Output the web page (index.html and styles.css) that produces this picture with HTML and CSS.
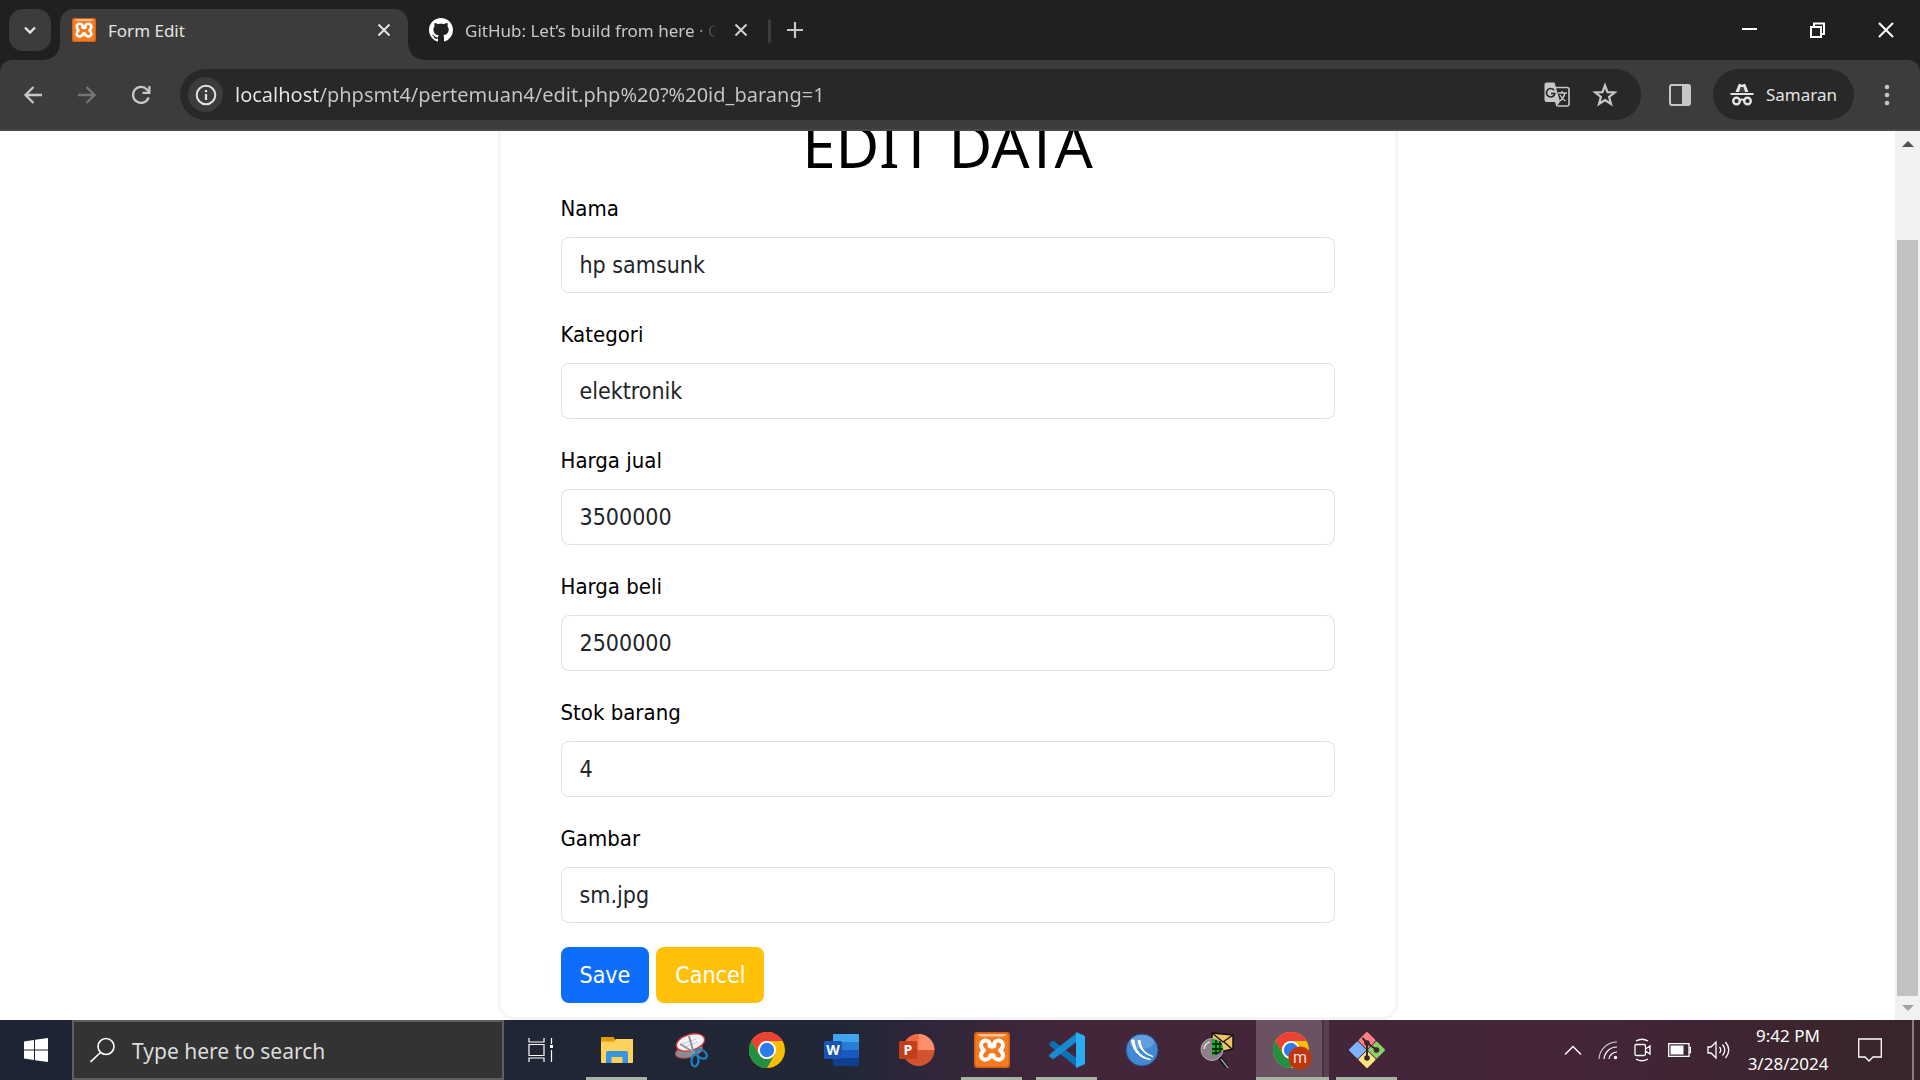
FILE: index.html
```html
<!DOCTYPE html>
<html lang="id">
<head>
<meta charset="utf-8">
<title>Form Edit</title>
<link rel="stylesheet" href="styles.css">
</head>
<body>
<svg class="defs" width="0" height="0" aria-hidden="true">
  <symbol id="xampp" viewBox="0 0 36 36">
    <rect width="36" height="36" rx="3" fill="#d65f12"/>
    <rect x="1.5" y="1.500" width="33" height="33" rx="3" fill="#f47b20"/>
    <path d="M4 2h28q0 2.500-4 2.500H8Q4 4.500 4 2z" fill="#fbc39a"/>
    <path d="M15.500 14C18 7.500 7 6.500 7 13c0 3 1.500 4 3 5.300C8.500 19.500 7 21 7 23.500c0 6 9 5 9.500 0q1.500-1 3 0C20 28.500 29 29.500 29 23.500c0-2.500-1.500-4-3-5.200 1.500-1.300 3-2.300 3-5.300 0-6.500-11-5.500-8.500 1q-2.500 1.500-5 0z" fill="none" stroke="#fff" stroke-width="4" stroke-linejoin="round"/>
  </symbol>
  <symbol id="chrome" viewBox="0 0 36 36">
    <circle cx="18" cy="18" r="18" fill="#fbbc05"/>
    <path d="M2.400 9A18 18 0 0 1 33.600 9H18a9 9 0 0 0-8 13.500z" fill="#ea4335"/>
    <path d="M2.400 9A18 18 0 0 0 18 36l7.800-13.500A9 9 0 0 1 10.200 22.500z" fill="#229044"/>
    <circle cx="18" cy="18" r="9" fill="#fff"/>
    <circle cx="18" cy="18" r="7.200" fill="#2f7bea"/>
  </symbol>
</svg>

<header class="browser">
  <div class="tabstrip">
    <button class="tab-search" aria-label="Search tabs"><svg width="18" height="18" viewBox="0 0 18 18"><path d="M4 6.500l5 5 5-5" fill="none" stroke="#e3e3e3" stroke-width="2.400"/></svg></button>
    <div class="tab tab-active">
      <svg width="24" height="24"><use href="#xampp"/></svg>
      <span class="tab-title">Form Edit</span>
      <button class="icon-btn" aria-label="Close tab"><svg width="14" height="14" viewBox="0 0 14 14"><path d="M1.500 1.500l11 11M12.500 1.500l-11 11" stroke="#e3e3e3" stroke-width="2"/></svg></button>
    </div>
    <div class="tab tab-idle">
      <svg width="24" height="24" viewBox="0 0 16 16"><path fill="#fff" d="M8 0C3.580 0 0 3.580 0 8c0 3.540 2.290 6.530 5.470 7.590.4.070.55-.17.55-.38 0-.19-.01-.82-.01-1.490-2.010.37-2.530-.49-2.690-.94-.09-.23-.48-.94-.82-1.130-.28-.15-.68-.52-.01-.53.63-.01 1.080.58 1.230.82.72 1.210 1.870.87 2.330.66.070-.52.28-.87.510-1.070-1.780-.2-3.640-.89-3.640-3.950 0-.87.31-1.590.82-2.150-.08-.2-.36-1.020.08-2.120 0 0 .67-.21 2.200.82.64-.18 1.320-.27 2-.27s1.360.09 2 .27c1.530-1.040 2.200-.82 2.200-.82.44 1.100.16 1.920.08 2.120.51.56.82 1.270.82 2.150 0 3.070-1.870 3.750-3.650 3.950.29.25.54.73.54 1.480 0 1.070-.01 1.930-.01 2.200 0 .21.15.46.55.38A8.010 8.010 0 0 0 16 8c0-4.420-3.580-8-8-8z"/></svg>
      <span class="tab-title">GitHub: Let’s build from here · GitHub</span>
      <button class="icon-btn" aria-label="Close tab"><svg width="14" height="14" viewBox="0 0 14 14"><path d="M1.500 1.500l11 11M12.500 1.500l-11 11" stroke="#d0d0d0" stroke-width="2"/></svg></button>
    </div>
    <button class="new-tab" aria-label="New tab"><svg width="16" height="16" viewBox="0 0 16 16"><path d="M8 0v16M0 8h16" stroke="#c7c7c7" stroke-width="2.200"/></svg></button>
    <div class="window-controls">
      <button class="icon-btn" aria-label="Minimize"><svg width="15" height="16" viewBox="0 0 15 16"><path d="M0 7h15" stroke="#fff" stroke-width="2"/></svg></button>
      <button class="icon-btn" aria-label="Restore"><svg width="15" height="16" viewBox="0 0 15 16"><path d="M1 5h10v10H1zM4 4V1.500h10V12h-3" fill="none" stroke="#fff" stroke-width="2"/></svg></button>
      <button class="icon-btn" aria-label="Close"><svg width="16" height="16" viewBox="0 0 16 16"><path d="M1 1l14 14M15 1L1 15" stroke="#fff" stroke-width="2"/></svg></button>
    </div>
  </div>

  <div class="toolbar">
    <nav class="history">
      <button class="icon-btn" aria-label="Back"><svg width="20" height="20" viewBox="0 0 20 20"><path d="M19 10H3M10.500 2L2.500 10l8 8" fill="none" stroke="#c7c7c7" stroke-width="2.300"/></svg></button>
      <button class="icon-btn" aria-label="Forward"><svg width="20" height="20" viewBox="0 0 20 20"><path d="M1 10h16M9.500 2l8 8-8 8" fill="none" stroke="#757575" stroke-width="2.300"/></svg></button>
      <button class="icon-btn" aria-label="Reload"><svg width="20" height="20" viewBox="0 0 20 20"><path d="M17.600 12.500A8 8 0 1 1 16 4.500L18 7" fill="none" stroke="#c7c7c7" stroke-width="2.300"/><path d="M19.500 1v8h-8V6.800h5.800V1z" fill="#c7c7c7"/></svg></button>
    </nav>
    <div class="omnibox">
      <button class="site-info" aria-label="Site information"><svg width="22" height="22" viewBox="0 0 22 22"><circle cx="11" cy="11" r="9.300" fill="none" stroke="#e3e3e3" stroke-width="2"/><path d="M11 10v6M11 6v2.200" stroke="#e3e3e3" stroke-width="2.200"/></svg></button>
      <input class="url" type="text" aria-label="Address" value="localhost/phpsmt4/pertemuan4/edit.php%20?%20id_barang=1">
      <button class="icon-btn" aria-label="Translate"><svg width="26" height="26" viewBox="0 0 26 26"><path d="M10 5.500h13a2 2 0 0 1 2 2V22a2 2 0 0 1-2 2H13.500" fill="none" stroke="#c7c7c7" stroke-width="1.600"/><path d="M2.500.5h8l5.500 19-3.500 5.500L11 20H2.500a2 2 0 0 1-2-2V2.500a2 2 0 0 1 2-2z" fill="#c7c7c7"/><path d="M10 8.200a4.200 4.200 0 1 0 .8 3.300H7" fill="none" stroke="#282828" stroke-width="1.600"/><path d="M14 11h9M18 9v2M21 11c-1 4-3 6.500-5 8M16 13c1.500 3 3 4.500 5.500 6" fill="none" stroke="#c7c7c7" stroke-width="1.400"/></svg></button>
      <button class="icon-btn" aria-label="Bookmark"><svg width="26" height="26" viewBox="0 0 26 26"><path d="M13 3.500l2.500 6.700 7.200.3-5.600 4.500 1.900 7-6-4-6 4 1.900-7-5.600-4.500 7.200-.3z" fill="none" stroke="#c7c7c7" stroke-width="2.200"/></svg></button>
    </div>
    <button class="icon-btn" aria-label="Side panel"><svg width="22" height="22" viewBox="0 0 22 22"><rect x="1" y="1" width="20" height="20" rx="2" fill="none" stroke="#c7c7c7" stroke-width="2"/><path d="M13 1h8v20h-8z" fill="#c7c7c7"/></svg></button>
    <button class="profile"><svg width="24" height="24" viewBox="0 0 24 24"><path d="M.5 10h23v2H.5zM5.500 9L8.500 1.500Q9 .5 10 1l2 .8L14 1q1-.5 1.500.5L18.500 9z" fill="#e3e3e3"/><path d="M9 9l1.500-5h3L15 9z" fill="#282828" opacity=".85"/><circle cx="6.500" cy="18" r="3.300" fill="none" stroke="#e3e3e3" stroke-width="2.400"/><circle cx="17.500" cy="18" r="3.300" fill="none" stroke="#e3e3e3" stroke-width="2.400"/><path d="M9.500 17.500q2.500-2 5 0" fill="none" stroke="#e3e3e3" stroke-width="2"/></svg>Samaran</button>
    <button class="icon-btn" aria-label="Menu"><svg width="6" height="22" viewBox="0 0 6 22"><g fill="#c7c7c7"><circle cx="3" cy="3" r="2.300"/><circle cx="3" cy="11" r="2.300"/><circle cx="3" cy="19" r="2.300"/></g></svg></button>
  </div>
</header>

<div class="viewport">
  <main class="page">
    <form class="card">
      <h1>EDIT DATA</h1>
      <div class="field"><label for="nama">Nama</label><input id="nama" type="text" value="hp samsunk"></div>
      <div class="field"><label for="kategori">Kategori</label><input id="kategori" type="text" value="elektronik"></div>
      <div class="field"><label for="jual">Harga jual</label><input id="jual" type="text" value="3500000"></div>
      <div class="field"><label for="beli">Harga beli</label><input id="beli" type="text" value="2500000"></div>
      <div class="field"><label for="stok">Stok barang</label><input id="stok" type="text" value="4"></div>
      <div class="field"><label for="gambar">Gambar</label><input id="gambar" type="text" value="sm.jpg"></div>
      <div class="actions">
        <button class="btn btn-save" type="submit">Save</button>
        <button class="btn btn-cancel" type="button">Cancel</button>
      </div>
    </form>
  </main>
  <div class="scrollbar">
    <svg class="scroll-arrow" width="12" height="6" viewBox="0 0 12 6"><path d="M0 6l6-6 6 6z" fill="#505050"/></svg>
    <div class="scroll-track"><div class="scroll-thumb"></div></div>
    <svg class="scroll-arrow" width="12" height="6" viewBox="0 0 12 6"><path d="M0 0l6 6 6-6z" fill="#a3a3a3"/></svg>
  </div>
</div>

<footer class="taskbar">
  <button class="start" aria-label="Start"><svg width="24" height="24" viewBox="0 0 24 24"><path d="M0 3.500l10-1.500v9.500H0zM11 1.800L24 0v11.500H11zM0 12.500h10V22L0 20.500zM11 12.500h13V24l-13-1.800z" fill="#fff"/></svg></button>
  <label class="search">
    <svg width="26" height="26" viewBox="0 0 26 26"><circle cx="16" cy="9.500" r="8" fill="none" stroke="#fff" stroke-width="1.600"/><path d="M10.500 15.500L.5 25" stroke="#fff" stroke-width="1.600"/></svg>
    <input type="text" placeholder="Type here to search" aria-label="Type here to search">
  </label>
  <button class="task-view" aria-label="Task view"><svg width="25" height="24" viewBox="0 0 25 24"><path d="M1 0v4h15V0M1 24v-4h15v4M1 6.500h15v11H1zM23.500 0v6M23.500 12v12" fill="none" stroke="#fff" stroke-width="1.200"/><path d="M22 7h3v3h-3z" fill="#fff"/></svg></button>
  <div class="apps">
    <button class="app running" aria-label="File Explorer"><svg width="36" height="36" viewBox="0 0 36 36"><path d="M2 5h12.500l2 3v4H2z" fill="#e09b00"/><path d="M2 9.500h13L17 7h17v23a1 1 0 0 1-1 1H3a1 1 0 0 1-1-1z" fill="#ffd25d"/><path d="M7 31V21q0-2 2-2h18q2 0 2 2v10h-5.500v-6h-11v6z" fill="#3894dc"/></svg></button>
    <button class="app" aria-label="Snipping Tool"><svg width="36" height="36" viewBox="0 0 36 36"><ellipse cx="15" cy="19" rx="14" ry="6.500" transform="rotate(-15 15 19)" fill="#8b8c94" stroke="#b33c40" stroke-width="1"/><ellipse cx="16.500" cy="10.500" rx="14.500" ry="8" transform="rotate(-17 16.500 10.500)" fill="#f4f4f6" stroke="#df3038" stroke-width="1.400"/><path d="M8 12l14-5M10 15l14-5" stroke="#c8c8d0"/><path d="M15 4l5 18M6 12l15 9" stroke="#8c939b" stroke-width="2"/><ellipse cx="27.500" cy="22" rx="3.800" ry="6" transform="rotate(-55 27.500 22)" fill="none" stroke="#1b82c4" stroke-width="2.200"/><ellipse cx="21" cy="28.500" rx="3.500" ry="6" transform="rotate(5 21 28.500)" fill="none" stroke="#1b82c4" stroke-width="2.200"/></svg></button>
    <button class="app" aria-label="Chrome"><svg width="36" height="36"><use href="#chrome"/></svg></button>
    <button class="app" aria-label="Word"><svg width="36" height="36" viewBox="0 0 36 36"><path d="M10 2h24q1 0 1 1v7H9V3q0-1 1-1z" fill="#41a5ee"/><path d="M9 10h26v8H9z" fill="#2b7cd3"/><path d="M9 18h26v8H9z" fill="#185abd"/><path d="M9 26h26v7q0 1-1 1H10q-1 0-1-1z" fill="#103f91"/><rect x="0" y="9" width="18" height="18" rx="1.500" fill="#1754b5"/><text x="9" y="23" text-anchor="middle" class="office-letter">W</text></svg></button>
    <button class="app" aria-label="PowerPoint"><svg width="36" height="36" viewBox="0 0 36 36"><circle cx="19.500" cy="18" r="16" fill="#d35230"/><path d="M19.500 2a16 16 0 0 0-16 16h16z" fill="#ed6c47"/><path d="M19.500 2a16 16 0 0 1 16 16h-16z" fill="#ff8f6b"/><rect x="0" y="9" width="18" height="18" rx="1.500" fill="#c43e1c"/><text x="9" y="23" text-anchor="middle" class="office-letter">P</text></svg></button>
    <button class="app running" aria-label="XAMPP"><svg width="36" height="36"><use href="#xampp"/></svg></button>
    <button class="app running" aria-label="Visual Studio Code"><svg width="36" height="36" viewBox="0 0 36 36"><path d="M.5 11.500l2.500-2.300q1-.7 2 0L28 26.500V35l-1-.5L.5 13.500q-.8-1 0-2z" fill="#0b70b4"/><path d="M.5 24.500l2.500 2.300q1 .7 2 0L28 9.500V1l-1 .5L.5 22.500q-.8 1 0 2z" fill="#168bd2"/><path d="M27 0l8 3.500q1 .5 1 1.500v26q0 1-1 1.500L27 36z" fill="#29adf2"/></svg></button>
    <button class="app" aria-label="MySQL tool"><svg width="36" height="36" viewBox="0 0 36 36"><circle cx="18" cy="18" r="16" fill="#4388d2" stroke="#205594" stroke-width="1"/><ellipse cx="18" cy="10" rx="12" ry="7" fill="#79aee6" opacity=".6"/><path d="M7.500 8c1 10 8 19 19 19.500C16 24.500 11 18 10 8zM14 8.500c1 8 6 14 15 16C20 21 17 16 16 8.500z" fill="#fff" stroke="#fff"/></svg></button>
    <button class="app" aria-label="Mail inspector"><svg width="36" height="36" viewBox="0 0 36 36"><path d="M13 1l21 2v14l-11 2.500L13 14z" fill="#edc367" stroke="#111" stroke-width="1.500"/><path d="M13 1l11 9L34 3M25 10l8 7" fill="none" stroke="#111" stroke-width="1.300"/><path d="M20 25l8 10" stroke="#111" stroke-width="4"/><path d="M22 27l7 9" stroke="#999" stroke-width="1.500"/><circle cx="13" cy="17.500" r="11" fill="#8e8089" stroke="#aaa" stroke-width="1"/><path d="M13 7q11 1 11 11l-6 4-5 2z" fill="#10b51b"/><path d="M13 12h10M13 17h11M13 21h7M17 8v15M21 9v12" stroke="#111" stroke-width="1.300"/><path d="M5 17q1-6 6-7" fill="none" stroke="#ddd" stroke-width="1.500"/></svg></button>
    <button class="app app-current running" aria-label="Chrome, current window"><svg width="40" height="40" viewBox="0 0 40 40"><use href="#chrome" y="2" width="36" height="36"/><circle cx="27" cy="28" r="11.500" fill="#bf360c"/><text x="27" y="33" text-anchor="middle" class="badge-letter">m</text></svg></button>
    <button class="app running" aria-label="Git"><svg width="36" height="36" viewBox="0 0 36 36"><g stroke-width="2" stroke-linejoin="round"><path d="M18 1l7.500 7.500L18 16l-7.500-7.500z" fill="#ff7f83" stroke="#ff7f83"/><path d="M8.500 10.500L16 18l-7.500 7.500L1 18z" fill="#80b3ff" stroke="#80b3ff"/><path d="M27.500 10.500L35 18l-7.500 7.500L20 18z" fill="#87d060" stroke="#87d060"/><path d="M18 20l7.500 7.500L18 35l-7.500-7.500z" fill="#ffe680" stroke="#ffe680"/></g><path d="M13.500 6l4.500 5v15M18 11l10 7" fill="none" stroke="#3d232f" stroke-width="2"/><g fill="#3d232f"><circle cx="18" cy="11" r="2.800"/><circle cx="18" cy="26" r="2.800"/><circle cx="27.500" cy="18" r="2.800"/></g></svg></button>
  </div>
  <div class="tray">
    <div class="tray-icons">
      <svg width="18" height="12" viewBox="0 0 18 12"><path d="M1 10.500l8-8 8 8" fill="none" stroke="#fff" stroke-width="1.400"/></svg>
      <svg width="20" height="20" viewBox="0 0 20 20"><g fill="none" stroke="#fff" stroke-width="1.200"><path d="M1 19A18 18 0 0 1 19 2" opacity=".8"/><path d="M6 19A13 13 0 0 1 19 7"/><path d="M11 19a8 8 0 0 1 8-7"/></g><circle cx="17.500" cy="17.500" r="1.700" fill="#fff"/></svg>
      <svg width="18" height="24" viewBox="0 0 18 24"><path d="M2 6.500h8q1.500 0 1.500 1.500v8q0 1.500-1.500 1.500H2.500Q1 17.500 1 16V8q0-1.500 1-1.500zM11.500 11l4.500-3v8l-4.500-3M2 3q6-3.500 12 0M2 21q6 3.500 12 0" fill="none" stroke="#fff" stroke-width="1.300"/></svg>
      <svg width="23" height="14" viewBox="0 0 23 14"><path d="M.7.7h20.300v12.600H.7zM21 4.500h1.500v5H21" fill="none" stroke="#fff" stroke-width="1.300"/><path d="M2.500 2.500h13v9h-13z" fill="#fff"/></svg>
      <svg width="23" height="20" viewBox="0 0 23 20"><path d="M1 7h3l5-5v16l-5-5H1zM12.500 7q2.500 3 0 6M15.500 4.500q4.500 5.500 0 11M18.500 2q6.500 8 0 16" fill="none" stroke="#fff" stroke-width="1.300"/></svg>
    </div>
    <div class="clock"><span>9:42 PM</span><span>3/28/2024</span></div>
    <button class="icon-btn" aria-label="Notifications"><svg width="24" height="24" viewBox="0 0 24 24"><path d="M.7 1h22.600v18H15l-4 4-4-4H.7z" fill="none" stroke="#fff" stroke-width="1.300"/></svg></button>
    <div class="show-desktop"></div>
  </div>
</footer>
</body>
</html>
```
FILE: styles.css
```css
* {
  box-sizing: border-box;
}

body {
  margin: 0;
  height: 100vh;
  display: flex;
  flex-direction: column;
  overflow: hidden;
  background: #fff;
  font-family: "Noto Sans", "Open Sans", sans-serif;
  font-size: 17px;
}

button,
input {
  font: inherit;
  border: 0;
  margin: 0;
}

button {
  padding: 0;
  background: none;
  color: inherit;
}

svg {
  display: block;
  flex: none;
}

.defs {
  position: absolute;
}

.icon-btn {
  flex: none;
  display: grid;
  place-items: center;
}

/* Browser frame */
.browser {
  flex: none;
  background: #1f2120;
  color: #e3e3e3;
}

.tabstrip {
  display: flex;
  height: 60px;
  padding: 9px 26px 0 9px;
}

.tab-search {
  width: 42px;
  height: 42px;
  display: grid;
  place-items: center;
  border-radius: 14px;
  background: #3c3c3c;
}

.tab {
  position: relative;
  display: flex;
  align-items: center;
  gap: 12px;
  height: 51px;
  padding-bottom: 9px;
}

.tab-title {
  flex: 1;
  overflow: hidden;
  white-space: nowrap;
  padding-top: 2px;
  line-height: 24px;
}

.tab-active {
  width: 348px;
  margin-left: 9px;
  padding-left: 12px;
  padding-right: 17px;
  border-radius: 14px 14px 0 0;
  background: #3c3c3c;
}

.tab-active::before,
.tab-active::after {
  content: "";
  position: absolute;
  bottom: 0;
  width: 15px;
  height: 15px;
}

.tab-active::before {
  right: 100%;
  background: radial-gradient(circle at 0 0, transparent 14px, #3c3c3c 15px);
}

.tab-active::after {
  left: 100%;
  background: radial-gradient(circle at 100% 0, transparent 14px, #3c3c3c 15px);
}

.tab-idle {
  width: 361px;
  padding-left: 21px;
  padding-right: 21px;
  color: #c7c7c7;
}

.tab-idle .tab-title {
  margin-right: 5px;
  mask-image: linear-gradient(90deg, #000 calc(100% - 24px), transparent);
}

.tab-idle::after {
  content: "";
  position: absolute;
  right: -2px;
  top: 10px;
  width: 3px;
  height: 24px;
  border-radius: 2px;
  background: #3c3c3c;
}

.new-tab {
  width: 52px;
  height: 42px;
  display: grid;
  place-items: center;
}

.window-controls {
  display: flex;
  gap: 53px;
  height: 42px;
  margin-left: auto;
}

.toolbar {
  display: flex;
  align-items: center;
  height: 71px;
  padding: 0 30px 0 23px;
  border-bottom: 2px solid #484848;
  border-radius: 12px 12px 0 0;
  background: #3c3c3c;
}

.history {
  display: flex;
  gap: 34px;
  margin-right: 29px;
}

.omnibox {
  flex: 1;
  display: flex;
  align-items: center;
  gap: 22px;
  height: 51px;
  margin-right: 28px;
  padding: 0 23px 0 8px;
  border-radius: 26px;
  background: #282828;
}

.site-info {
  flex: none;
  width: 35px;
  height: 35px;
  display: grid;
  place-items: center;
  border-radius: 50%;
  background: #3c3c3c;
}

/* The host name is brighter than the path */
.url {
  flex: 1;
  min-width: 0;
  margin-left: -10px;
  padding: 0;
  font-size: 20px;
  color: transparent;
  background: linear-gradient(90deg, #e8e8e8 83px, #c7c7c7 83px);
  background-clip: text;
}

.profile {
  display: flex;
  align-items: center;
  gap: 12px;
  height: 51px;
  margin: 0 30px 0 22px;
  padding: 0 17px;
  border-radius: 26px;
  background: #282828;
}

/* Scrolled document */
.viewport {
  flex: 1;
  min-height: 0;
  display: flex;
}

.page {
  flex: 1;
  display: flex;
  flex-direction: column;
  justify-content: flex-end;
  align-items: center;
  overflow: hidden;
  font-family: "DejaVu Sans Condensed", "Noto Sans", sans-serif;
}

.card {
  width: 900px;
  max-width: 100%;
  padding: 48px 60px 14px;
  border: 3px solid #f5f5f5;
  border-radius: 16px;
}

h1 {
  margin: 0 0 12px;
  font-family: "Noto Sans", sans-serif;
  font-size: 60px;
  font-weight: 400;
  line-height: 68px;
  text-align: center;
  color: #000;
}

.field {
  display: flex;
  flex-direction: column;
  gap: 10px;
  margin-bottom: 24px;
}

.field label {
  font-size: 22px;
  line-height: 36px;
  color: #000;
}

.field input {
  height: 56px;
  padding: 0 18px;
  border: 1px solid #dee2e6;
  border-radius: 8px;
  background: #fff;
  color: #212529;
  font-size: 23px;
}

.actions {
  display: flex;
  gap: 7px;
}

.btn {
  height: 56px;
  padding: 0 19px;
  border-radius: 8px;
  color: #fff;
  font-size: 23px;
}

.btn-save {
  background: #0d6efd;
}

.btn-cancel {
  background: #ffc107;
}

.scrollbar {
  flex: none;
  display: flex;
  flex-direction: column;
  align-items: center;
  gap: 9px;
  width: 25px;
  padding: 10px 2px 9px;
  background: #f1f1f1;
}

.scroll-track {
  flex: 1;
  width: 100%;
  display: flex;
  flex-direction: column;
  justify-content: flex-end;
}

.scroll-thumb {
  height: 90%;
  background: #c1c1c1;
}

/* Taskbar */
.taskbar {
  flex: none;
  display: flex;
  height: 60px;
  color: #fff;
  background: linear-gradient(90deg, #1f2434 0%, #212735 44%, #35263a 50%, #44263b 56%, #44253a 82%, #3a252d 95%, #36262b 100%);
}

.start {
  width: 72px;
  display: grid;
  place-items: center;
}

.search {
  display: flex;
  align-items: center;
  gap: 16px;
  width: 432px;
  padding: 0 16px;
  border: 2px solid #5e5e5e;
  background: #333;
}

.search input {
  flex: 1;
  min-width: 0;
  padding: 2px 0 0;
  background: none;
  font-size: 21px;
}

.search input::placeholder {
  color: #dcdcdc;
  opacity: 1;
}

.task-view {
  width: 72px;
  display: grid;
  place-items: center;
}

.apps {
  display: flex;
  gap: 14px;
  margin-left: 10px;
}

.app {
  width: 61px;
  display: grid;
  place-items: center;
  border-top: 3px solid transparent;
  border-bottom: 3px solid transparent;
}

.running {
  border-bottom-color: #a5b5a5;
}

.app-current {
  width: 73px;
  margin: 0 -7px 0 -5px;
  border-top: 0;
  padding-top: 3px;
  background: linear-gradient(90deg, #6b5263 66px, #47303f 66px, #47303f 68px, #58414f 68px);
  background-clip: padding-box;
}

.office-letter {
  fill: #fff;
  font: 700 14px "Open Sans", sans-serif;
}

.badge-letter {
  fill: #f5ddd5;
  font: 16px Roboto, sans-serif;
}

.tray {
  display: flex;
  align-items: center;
  gap: 17px;
  margin-left: auto;
}

.tray-icons {
  display: flex;
  align-items: center;
  gap: 16px;
  margin-right: -4px;
}

.clock {
  width: 90px;
  display: flex;
  flex-direction: column;
  align-items: center;
  line-height: 28px;
  font-size: 17px;
}

.tray .icon-btn {
  margin-left: 8px;
}

.show-desktop {
  align-self: stretch;
  width: 8px;
  margin-left: 13px;
  border-left: 2px solid #8a7d82;
}
```
